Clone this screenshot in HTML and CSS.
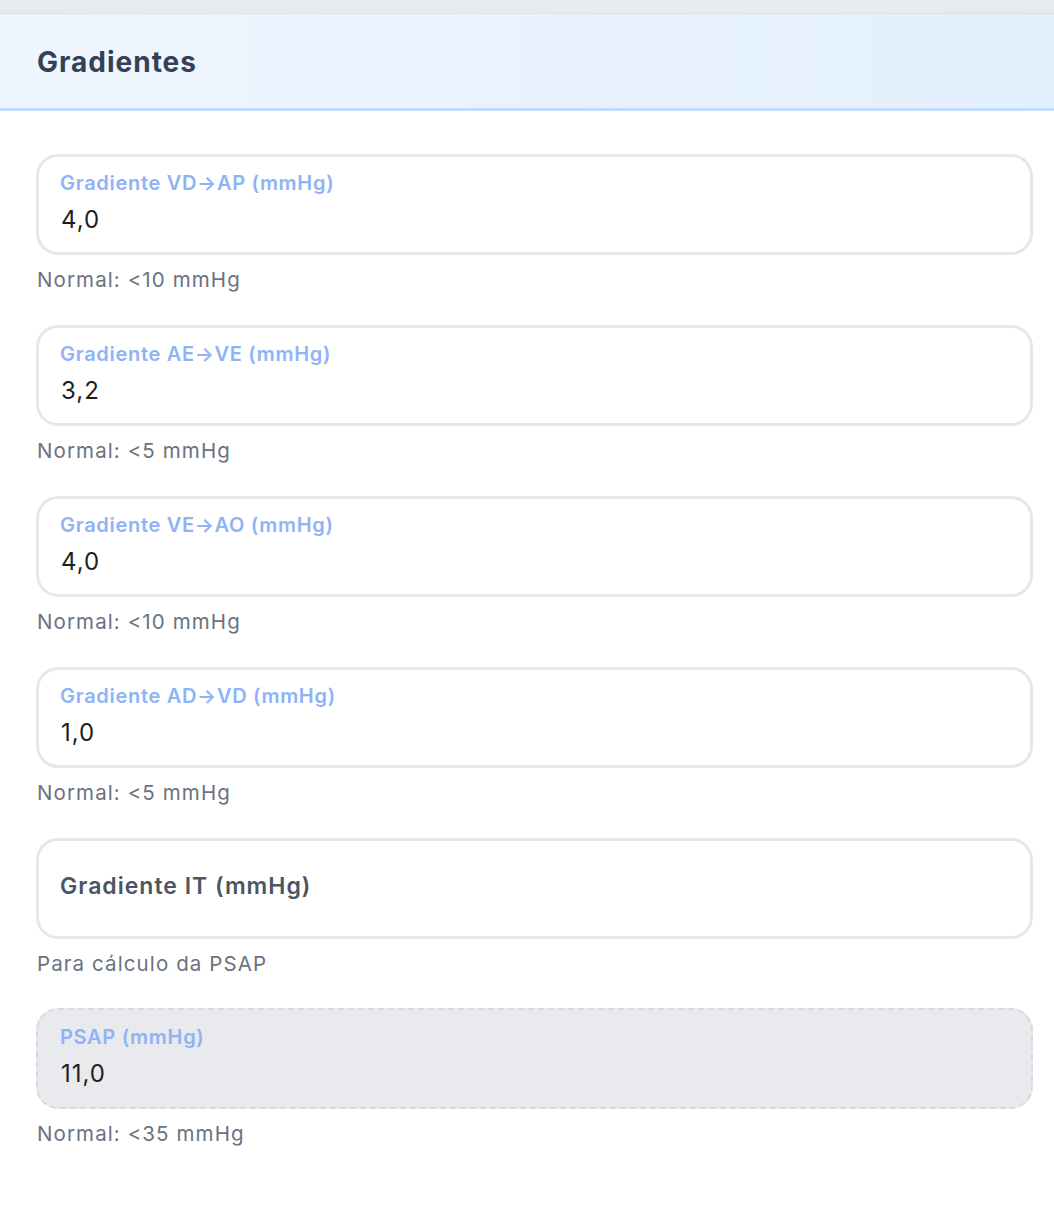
FILE: index.html
```html
<!DOCTYPE html>
<html lang="pt">
<head>
<meta charset="utf-8">
<link rel="stylesheet" href="styles.css">
</head>
<body>
<div class="topbar"></div>
<div class="header"><h2 class="title">Gradientes</h2></div>
<div class="content">
  <div class="group">
    <div class="field">
      <div class="label">Gradiente VD→AP (mmHg)</div>
      <div class="value">4,0</div>
    </div>
    <div class="help">Normal: &lt;10 mmHg</div>
  </div>
  <div class="group">
    <div class="field">
      <div class="label">Gradiente AE→VE (mmHg)</div>
      <div class="value">3,2</div>
    </div>
    <div class="help">Normal: &lt;5 mmHg</div>
  </div>
  <div class="group">
    <div class="field">
      <div class="label">Gradiente VE→AO (mmHg)</div>
      <div class="value">4,0</div>
    </div>
    <div class="help">Normal: &lt;10 mmHg</div>
  </div>
  <div class="group">
    <div class="field">
      <div class="label">Gradiente AD→VD (mmHg)</div>
      <div class="value">1,0</div>
    </div>
    <div class="help">Normal: &lt;5 mmHg</div>
  </div>
  <div class="group group-short">
    <div class="field field-empty">
      <div class="placeholder">Gradiente IT (mmHg)</div>
    </div>
    <div class="help">Para cálculo da PSAP</div>
  </div>
  <div class="group">
    <div class="field field-readonly">
      <div class="label">PSAP (mmHg)</div>
      <div class="value">11,0</div>
    </div>
    <div class="help">Normal: &lt;35 mmHg</div>
  </div>
</div>
</body>
</html>
```

FILE: styles.css
```css
html, body {
  margin: 0;
  padding: 0;
  background: #ffffff;
  font-family: Inter, "Noto Sans", "Liberation Sans", sans-serif;
}

.topbar {
  height: 13px;
  background: #e8eaef;
  border-bottom: 1px solid #dcdfe5;
}

.header {
  box-sizing: border-box;
  height: 97px;
  display: flex;
  align-items: center;
  padding: 2px 0 0 37px;
  background: linear-gradient(90deg, #eff6ff 0%, #e2effc 100%);
  border-bottom: 3px solid #c3dbfc;
}

.title {
  margin: 0;
  font-size: 28px;
  font-weight: 700;
  color: #334155;
  letter-spacing: 1px;
}

.content {
  padding: 43px 21px 40px 36px;
  display: flex;
  flex-direction: column;
}

.group {
  height: 171px;
}

.group-short {
  height: 170px;
}

.field {
  box-sizing: border-box;
  height: 101px;
  border: 3px solid #e3e8ef;
  border-radius: 22px;
  padding: 13px 21px 0 21px;
  background: #ffffff;
}

.label {
  font-size: 20px;
  font-weight: 600;
  line-height: 26px;
  color: #8eb3f6;
  letter-spacing: 0.7px;
}

.value {
  margin-top: 9px;
  padding-left: 1px;
  font-size: 24px;
  line-height: 30px;
  color: #1c1f24;
  letter-spacing: 1px;
}

.field-empty {
  display: flex;
  align-items: center;
  padding-top: 0;
  padding-bottom: 5px;
}

.placeholder {
  font-size: 23px;
  font-weight: 600;
  color: #4b5563;
  letter-spacing: 1px;
}

.field-readonly {
  background: #e9eaee;
  border: 2px dashed #d6d9de;
  padding-left: 22px;
  padding-top: 14px;
}

.help {
  margin-top: 12px;
  font-size: 20.5px;
  line-height: 26px;
  color: #6b7280;
  padding-left: 1px;
  letter-spacing: 1.1px;
}
```
